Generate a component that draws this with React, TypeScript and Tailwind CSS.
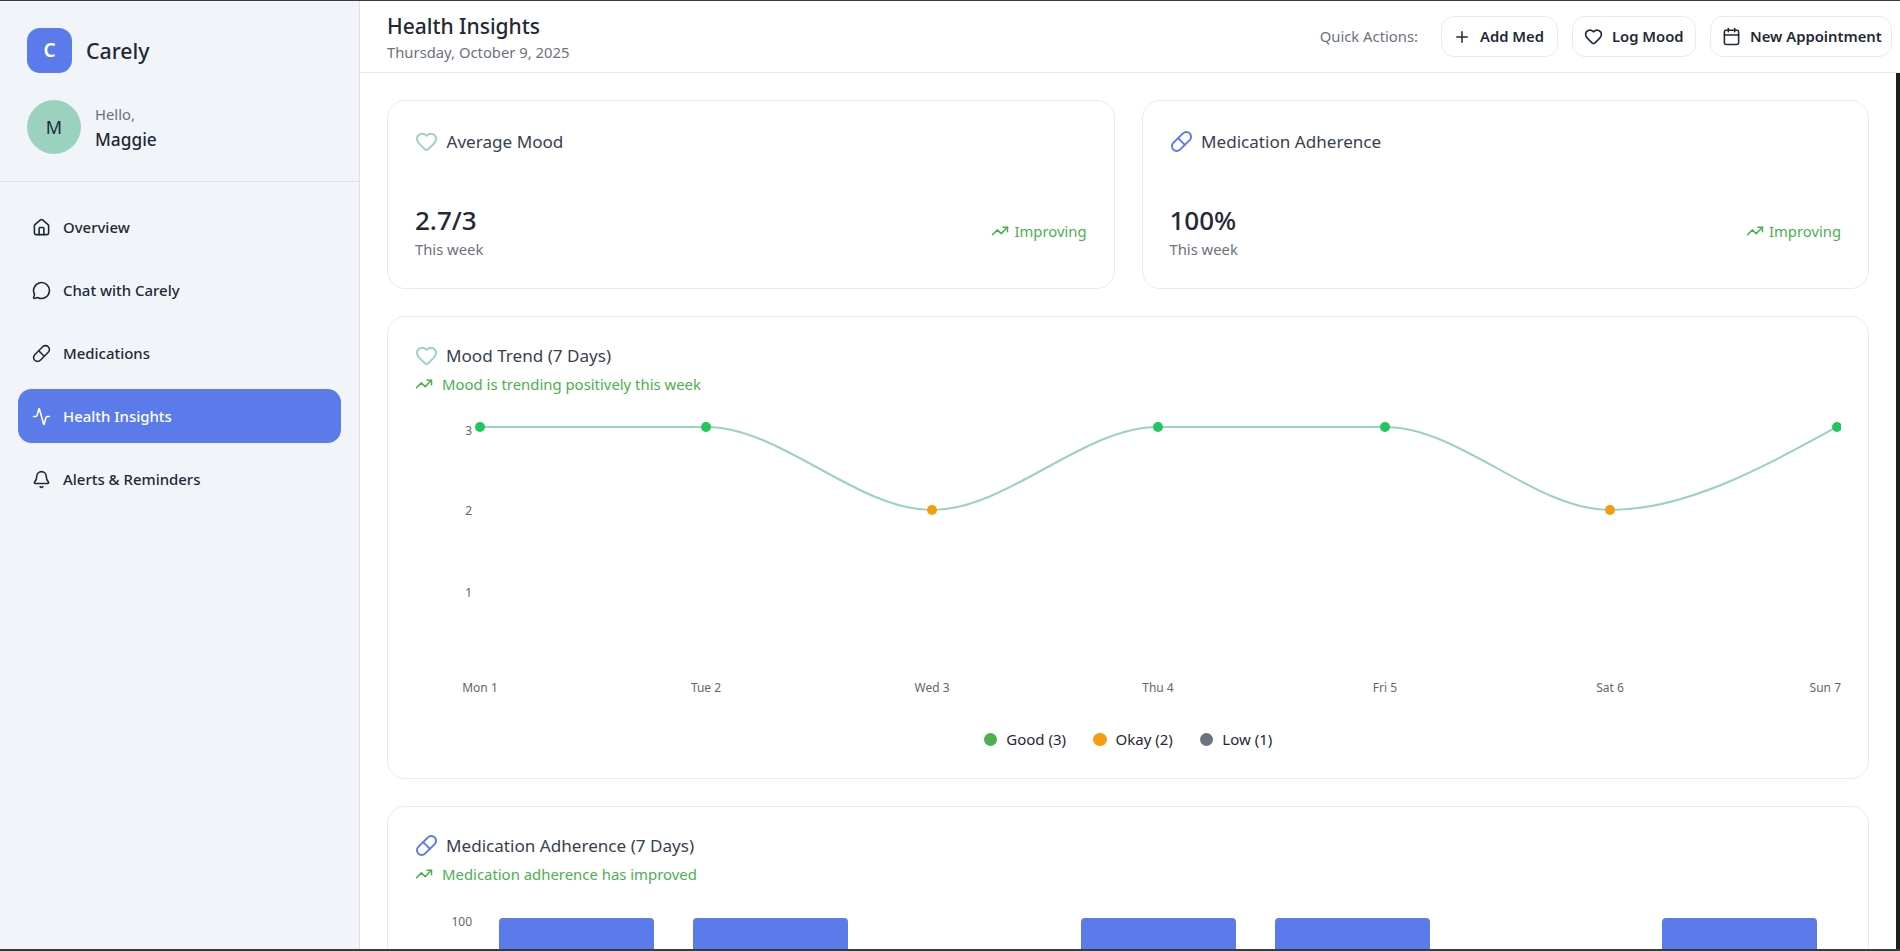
import { Activity, Bell, Calendar, Heart, Home, MessageCircle, Pill, Plus, TrendingUp } from "lucide-react";

const navItems = [
  { label: "Overview", icon: Home },
  { label: "Chat with Carely", icon: MessageCircle },
  { label: "Medications", icon: Pill },
  { label: "Health Insights", icon: Activity, active: true },
  { label: "Alerts & Reminders", icon: Bell },
];

const moodPoints = [
  { day: "Mon 1", x: 65, y: 30, color: "#22c55e" },
  { day: "Tue 2", x: 291, y: 30, color: "#22c55e" },
  { day: "Wed 3", x: 517, y: 113, color: "#f59e0b" },
  { day: "Thu 4", x: 743, y: 30, color: "#22c55e" },
  { day: "Fri 5", x: 970, y: 30, color: "#22c55e" },
  { day: "Sat 6", x: 1195, y: 113, color: "#f59e0b" },
  { day: "Sun 7", x: 1422, y: 30, color: "#22c55e" },
];

const moodLine =
  "M65 30 L291 30 C366.3 30 441.7 113 517 113 C592.3 113 667.7 30 743 30 L970 30 C1045 30 1120 113 1195 113 C1270.3 113 1346 71.5 1422 30";

// the last chart runs past the fold, only its top is visible
const adherenceBars = [84, 278, 666, 860, 1247];

function StatCard({ title, value, icon: Icon, iconClass }: { title: string; value: string; icon: typeof Heart; iconClass: string }) {
  return (
    <div className="h-[189px] rounded-[18px] border border-[#e9ebee] bg-white p-[27px]">
      <div className="flex h-[27px] items-center gap-[8.5px]">
        <Icon className={`h-[23px] w-[23px] ${iconClass}`} strokeWidth={2} />
        <span className="text-[17.1px] text-[#374151]">{title}</span>
      </div>
      <div className="mt-[47px] flex items-center justify-between">
        <div>
          <div className="text-[26px] font-medium leading-[37px] text-[#1f2937]">{value}</div>
          <div className="text-[14.8px] leading-[21px] text-[#6b7280]">This week</div>
        </div>
        <div className="flex items-center gap-[5px] text-[14.8px] text-[#4caf50]">
          <TrendingUp className="h-[18px] w-[18px]" />
          Improving
        </div>
      </div>
    </div>
  );
}

function ChartHeading({ title, note, icon: Icon, iconClass }: { title: string; note: string; icon: typeof Heart; iconClass: string }) {
  return (
    <>
      <div className="flex h-[27px] items-center gap-[8px]">
        <Icon className={`h-[23px] w-[23px] ${iconClass}`} strokeWidth={2} />
        <span className="text-[17.1px] text-[#374151]">{title}</span>
      </div>
      <div className="mt-[3px] mb-[1px] flex h-[24px] items-center gap-[9px] text-[14.9px] text-[#4caf50]">
        <TrendingUp className="h-[18px] w-[18px]" />
        {note}
      </div>
    </>
  );
}

function LegendItem({ color, label }: { color: string; label: string }) {
  return (
    <div className="flex items-center gap-[9px]">
      <span className={`h-[13.5px] w-[13.5px] rounded-full ${color}`} />
      <span className="text-[15px] text-[#1f2937]">{label}</span>
    </div>
  );
}

export default function App() {
  return (
    <div className="flex h-screen flex-col overflow-hidden border-t border-b-2 border-[#3a3a3a] bg-white font-['Noto_Sans',sans-serif]">
      <div className="flex min-h-0 flex-1">
        {/* Sidebar */}
        <aside className="w-[360px] shrink-0 border-r border-[#dde1e6] bg-[#f1f5f9]">
          <div className="border-b border-[#dde1e6] p-[27px]">
            <div className="flex items-center gap-[14px]">
              <div className="flex h-[45px] w-[45px] items-center justify-center rounded-[13px] bg-[#5b7bea] text-[19px] font-semibold text-white">C</div>
              <span className="text-[21.3px] font-medium text-[#1f2937]">Carely</span>
            </div>
            <div className="mt-[27px] flex items-center gap-[14px]">
              <div className="flex h-[54px] w-[54px] items-center justify-center rounded-full bg-[#9ad1bf] text-[18px] text-[#1f2937]">M</div>
              <div>
                <div className="text-[14.8px] leading-[24px] text-[#6b7280]">Hello,</div>
                <div className="text-[17.3px] font-medium leading-[27px] text-[#1f2937]">Maggie</div>
              </div>
            </div>
          </div>
          <nav className="flex flex-col gap-[9px] p-[18px]">
            {navItems.map(({ label, icon: Icon, active }) => (
              <div
                key={label}
                className={`flex h-[54px] items-center gap-[12.5px] rounded-[13.5px] pl-[13.5px] text-[14.95px] font-medium ${active ? "bg-[#5b7bea] text-white" : "text-[#1f2937]"}`}
              >
                <Icon className="h-[19px] w-[19px]" />
                <span>{label}</span>
              </div>
            ))}
          </nav>
        </aside>

        <div className="flex min-w-0 flex-1 flex-col">
          {/* Top bar */}
          <header className="flex h-[72px] shrink-0 items-center justify-between border-b border-[#e9ebee] pl-[27px] pr-[8px]">
            <div>
              <h1 className="pt-[1px] text-[21px] font-medium leading-[30px] text-[#1f2937]">Health Insights</h1>
              <p className="text-[14.8px] leading-[23px] text-[#6b7280]">Thursday, October 9, 2025</p>
            </div>
            <div className="flex items-center gap-[14px]">
              <span className="mr-[9px] text-[14.8px] text-[#6b7280]">Quick Actions:</span>
              <button className="flex h-[41px] w-[117px] items-center gap-[9px] rounded-[13px] border border-[#e9ebee] pl-[11px] text-[14.8px] font-semibold text-[#1f2937]">
                <Plus className="h-[18px] w-[18px] shrink-0" />
                Add Med
              </button>
              <button className="flex h-[41px] w-[124px] items-center gap-[9px] rounded-[13px] border border-[#e9ebee] pl-[11px] text-[14.8px] font-semibold text-[#1f2937]">
                <Heart className="h-[19px] w-[19px] shrink-0" />
                Log Mood
              </button>
              <button className="flex h-[41px] w-[182px] items-center gap-[9px] rounded-[13px] border border-[#e9ebee] pl-[11px] text-[14.8px] font-semibold whitespace-nowrap text-[#1f2937]">
                <Calendar className="h-[19px] w-[19px] shrink-0" />
                New Appointment
              </button>
            </div>
          </header>

          {/* Page content */}
          <main className="min-h-0 flex-1 overflow-hidden border-r-4 border-[#1e1e1e] p-[27px]">
            <div className="grid grid-cols-2 gap-[27px]">
              <StatCard title="Average Mood" value="2.7/3" icon={Heart} iconClass="text-[#9ad1bf]" />
              <StatCard title="Medication Adherence" value="100%" icon={Pill} iconClass="text-[#5b7bea]" />
            </div>

            <section className="mt-[27px] h-[463px] rounded-[18px] border border-[#e9ebee] px-[27px] pt-[25px]">
              <ChartHeading title="Mood Trend (7 Days)" note="Mood is trending positively this week" icon={Heart} iconClass="text-[#9ad1bf]" />
              <svg width="1426" height="300" className="block">
                {[["3", 38], ["2", 117.5], ["1", 199.5]].map(([n, y]) => (
                  <text key={n} x="57" y={y} textAnchor="end" fontSize="12" fill="#666">{n}</text>
                ))}
                <path d={moodLine} fill="none" stroke="#9ad1bf" strokeWidth="2" />
                {moodPoints.map((p) => (
                  <circle key={p.day} cx={p.x} cy={p.y} r="5" fill={p.color} />
                ))}
                {moodPoints.map((p, i) => (
                  <text key={p.day} x={i === 6 ? 1426 : p.x} y="295" textAnchor={i === 6 ? "end" : "middle"} fontSize="12" fill="#666">{p.day}</text>
                ))}
              </svg>
              <div className="mt-[31px] flex items-center justify-center gap-[27px]">
                <LegendItem color="bg-[#4caf50]" label="Good (3)" />
                <LegendItem color="bg-[#f59e0b]" label="Okay (2)" />
                <LegendItem color="bg-[#6b7280]" label="Low (1)" />
              </div>
            </section>

            <section className="mt-[27px] h-[463px] rounded-[18px] border border-[#e9ebee] px-[27px] pt-[25px]">
              <ChartHeading title="Medication Adherence (7 Days)" note="Medication adherence has improved" icon={Pill} iconClass="text-[#5b7bea]" />
              <svg width="1426" height="290" className="block">
                <text x="57" y="39" textAnchor="end" fontSize="12" fill="#666">100</text>
                {adherenceBars.map((x) => (
                  <rect key={x} x={x} y="31" width="155" height="240" rx="4" fill="#5b7bea" />
                ))}
              </svg>
            </section>
          </main>
        </div>
      </div>
    </div>
  );
}
